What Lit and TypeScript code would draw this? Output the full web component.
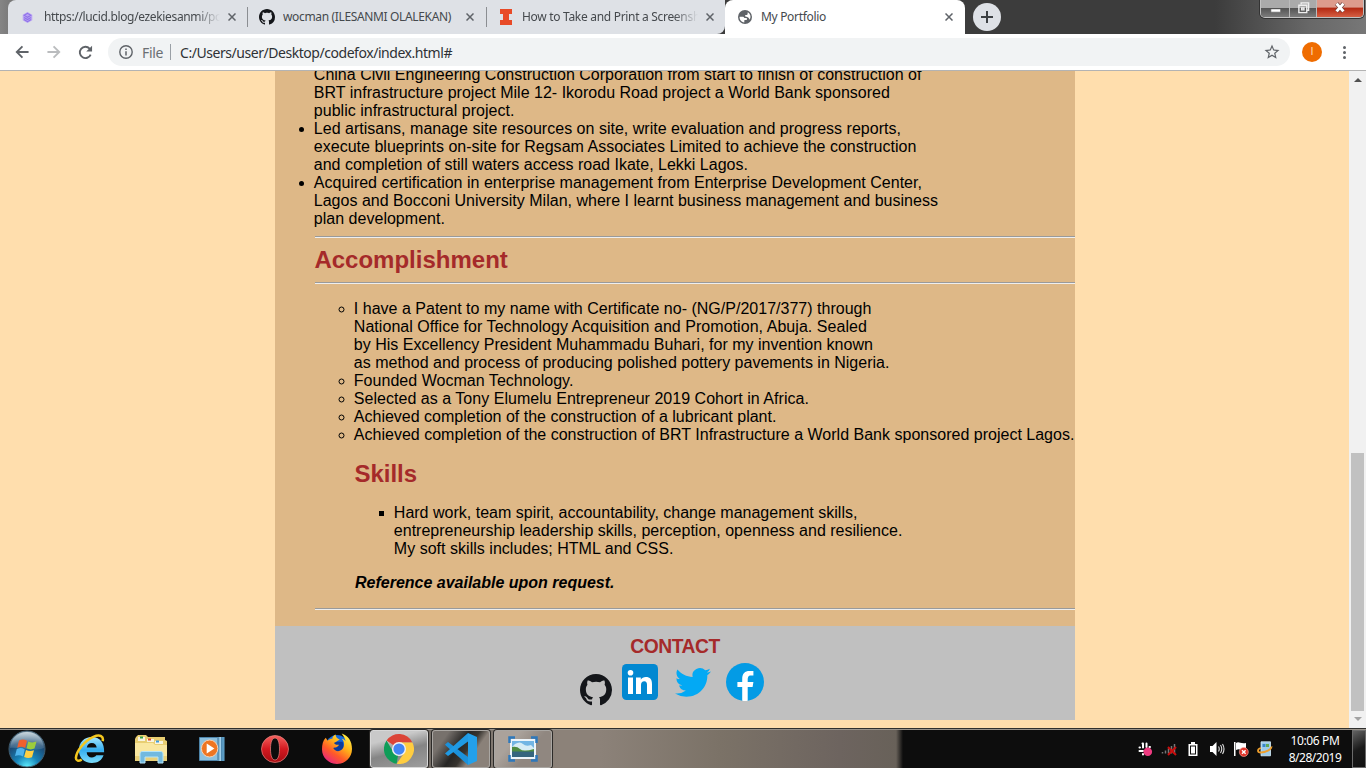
import { LitElement, html, svg, css } from "lit";
import { customElement, property } from "lit/decorators.js";

const OCTOCAT = "M8 0C3.58 0 0 3.58 0 8c0 3.54 2.29 6.53 5.47 7.59.4.07.55-.17.55-.38 0-.19-.01-.82-.01-1.49-2.01.37-2.53-.49-2.69-.94-.09-.23-.48-.94-.82-1.13-.28-.15-.68-.52-.01-.53.63-.01 1.08.58 1.23.82.72 1.21 1.87.87 2.33.66.07-.52.28-.87.51-1.07-1.78-.2-3.64-.89-3.64-3.95 0-.87.31-1.59.82-2.15-.08-.2-.36-1.02.08-2.12 0 0 .67-.21 2.2.82.64-.18 1.32-.27 2-.27s1.36.09 2 .27c1.53-1.04 2.2-.82 2.2-.82.44 1.1.16 1.92.08 2.12.51.56.82 1.27.82 2.15 0 3.07-1.87 3.75-3.65 3.95.29.25.54.73.54 1.48 0 1.07-.01 1.93-.01 2.2 0 .21.15.46.55.38A8.01 8.01 0 0 0 16 8c0-4.42-3.58-8-8-8z";

const icons: Record<string, [string, unknown]> = {
  lucid: ["0 0 12 14", svg`<path fill="#b9a3f3" d="M6 1l5.2 3v6L6 13 .8 10V4z"/><path fill="none" stroke="#8f72e8" stroke-width="1.100" d="M6 2.600l3.600 2.100L6 6.800 2.400 4.700zM2.200 7L6 9.200 9.800 7M2.200 9.200L6 11.400l3.800-2.200"/>`],
  github: ["0 0 16 16", svg`<path fill="#14161a" d=${OCTOCAT} />`],
  illinois: ["0 0 12 16", svg`<path fill="#e84a27" d="M0 0h12v5H9v6h3v5H0v-5h3V5H0z"/>`],
  globe: ["0 0 24 24", svg`<path fill="#5f6368" d="M12 0a12 12 0 1 0 0 24 12 12 0 0 0 0-24zm-1.200 21.300C5.500 20.700 2.500 16.500 2.700 11.500H8c1.500 0 2 1 3 2h2.500c1.500 0 2 1 2 2s-.5 1.500-1.500 1.500h-2c-1 0-1.200.8-1.200 1.500zM20 16.500c-.5-1.500-1.500-2.500-2.500-3.500-1-1.200-2.500-1.500-4-1.500-1 0-1.500-.7-1.500-1.500s.5-1.500 1.500-1.500H15c1 0 1.500-.8 1.500-1.500V4c4.500 2 6.500 8 3.500 12.500z"/>`],
  close: ["0 0 8 8", svg`<path stroke="#5f6368" stroke-width="1.500" d="M.5.5l7 7M7.500.5l-7 7"/>`],
  plus: ["0 0 12 12", svg`<path stroke="#3c4043" stroke-width="2" d="M6 0v12M0 6h12"/>`],
  back: ["0 0 16 16", svg`<path fill="none" stroke="#5f6368" stroke-width="2.100" d="M15.500 8H2.500M8.500 1.500L2 8l6.500 6.500"/>`],
  forward: ["0 0 16 16", svg`<path fill="none" stroke="#babcbe" stroke-width="2.100" d="M.5 8h13M7.500 1.500L14 8l-6.500 6.500"/>`],
  reload: ["0 0 16 16", svg`<path fill="none" stroke="#5f6368" stroke-width="2" d="M13.500 10.200A6 6 0 1 1 12.400 3.900L14 5.500"/><path fill="#5f6368" d="M15 .8V7H8.800z"/>`],
  info: ["0 0 14 14", svg`<circle cx="7" cy="7" r="6.200" fill="none" stroke="#5f6368" stroke-width="1.400"/><path stroke="#5f6368" stroke-width="1.500" d="M7 6.200v4.200M7 3.500v1.500"/>`],
  star: ["0 0 24 24", svg`<path fill="#5f6368" d="M22 9.240l-7.190-.62L12 2 9.190 8.630 2 9.240l5.460 4.730L5.820 21 12 17.270 18.180 21l-1.630-7.030L22 9.240zM12 15.400l-3.760 2.270 1-4.280-3.320-2.880 4.380-.38L12 6.100l1.710 4.040 4.380.38-3.320 2.880 1 4.280L12 15.400z"/>`],
  linkedin: ["0 0 36 36", svg`<rect width="36" height="36" rx="4.500" fill="#0288d1"/><g fill="#fff"><circle cx="8.500" cy="8.700" r="2.800"/><path d="M6 13.500h5V30H6zM14 13.500h4.800v2.200c1-1.600 2.800-2.600 5-2.600 4.300 0 6.200 2.600 6.200 7V30h-5v-9.200c0-2.200-.8-3.600-2.700-3.600-2.100 0-3.300 1.500-3.300 3.800v9h-5z"/></g>`],
  twitter: ["0 1.500 24 20.500", svg`<path fill="#03a9f4" d="M23.950 4.570a10 10 0 0 1-2.820.77 4.960 4.960 0 0 0 2.160-2.720c-.95.55-2 .95-3.130 1.180a4.920 4.920 0 0 0-8.380 4.480C7.690 8.100 4.070 6.130 1.640 3.160a4.820 4.820 0 0 0-.67 2.480c0 1.710.87 3.210 2.190 4.100a4.900 4.900 0 0 1-2.230-.62v.06a4.920 4.920 0 0 0 3.950 4.830 5 5 0 0 1-2.210.08 4.940 4.940 0 0 0 4.600 3.420A9.870 9.870 0 0 1 0 19.540a14 14 0 0 0 7.550 2.210c9.050 0 14-7.500 14-13.980 0-.21 0-.42-.02-.63a9.940 9.940 0 0 0 2.460-2.550z"/>`],
  facebook: ["0 0 38 38", svg`<circle cx="19" cy="19" r="19" fill="#039be5"/><path fill="#fff" d="M21.700 24h4.900l.8-5h-5.700v-2.700c0-2 .7-3.900 2.600-3.900h3.100V8.100c-.5-.1-1.700-.2-3.900-.2-4.600 0-7.300 2.400-7.300 8V19h-4.800v5h4.800v13.700c.9.1 1.900.3 2.900.3.900 0 1.700-.1 2.600-.2z"/>`],
  start: ["0 0 38 38", svg`<defs><radialGradient id="o" cx=".5" cy="1" r=".95"><stop offset="0" stop-color="#5ff0ff"/><stop offset=".35" stop-color="#1683b8"/><stop offset=".75" stop-color="#1d4670"/><stop offset="1" stop-color="#7d97a8"/></radialGradient><linearGradient id="gl" x2="0" y2="1"><stop offset="0" stop-color="#d5e0e6" stop-opacity=".85"/><stop offset="1" stop-color="#7a9fb5" stop-opacity=".25"/></linearGradient></defs><circle cx="19" cy="19" r="18" fill="url(#o)" stroke="#415e70"/><path fill="url(#gl)" d="M2 18C3 7 11 2 19 2s16 5 17 16c-10 4-24-1-34 0z"/><path fill="#f0602e" d="M11 10.500c3-1.500 5.500-1.200 8 .3L17.200 18c-2.500-1.500-5-1.700-8-.3z"/><path fill="#9ccc3c" d="M20.300 11.400c2.700 1.400 5.400 1.300 8.200.2l-2 7c-2.800 1.200-5.300 1-8 -.3z"/><path fill="#4fb4ec" d="M8.800 19c3-1.400 5.500-1.100 8 .4L15 26.500c-2.500-1.500-5-1.700-8-.4z"/><path fill="#ffd042" d="M18 20c2.700 1.400 5.300 1.300 8 .2l-2 7c-2.700 1.100-5.200 1-7.900-.3z"/>`],
  ie: ["0 0 32 32", svg`<defs><linearGradient id="ie" x2="0" y2="1"><stop offset="0" stop-color="#a8e8ff"/><stop offset=".5" stop-color="#35aef0"/><stop offset="1" stop-color="#7cdcfb"/></linearGradient></defs><path fill="url(#ie)" fill-rule="evenodd" d="M18.500 4C10.500 4 5 9.500 5 17.500S10.500 31 18.500 31c6 0 10.300-2.800 12-8h-7.500c-1 1.500-2.400 2.200-4.500 2.200-3.200 0-5.200-2-5.400-5.400h18C31.600 10 26.500 4 18.500 4zm-5.300 11c.4-3 2.400-4.800 5.200-4.800s4.800 1.800 5 4.800z"/><path fill="none" stroke="#f4c71e" stroke-width="2.600" d="M29.500 8.500C31 3.500 27 1 20 4 11 8 2.500 18.500 2 25.500c-.2 3.500 2.500 3.800 6 2"/>`],
  folder: ["0 0 32 30", svg`<path fill="#e8ce72" d="M1 3l2-2h8l2 2h17v3l2 1v20H0V5z"/><path fill="#f8f4df" d="M3 3h7v4H3zM12 5h7v3h-7zM20 7h8v3h-8z"/><path fill="#31a34a" d="M5 2.500h3v2H5z"/><path fill="#e04b2f" d="M13 4.500h3v2h-3z"/><path fill="#3f9bdc" d="M21 6.500h3v2h-3z"/><path fill="#f9e7a0" d="M0 9h18l2 2h12v15H0z"/><path fill="#e9d078" d="M0 22h32v5H0z"/><path fill="#72b9df" stroke="#b5e4f8" d="M5 29V20c0-2 1-2.500 3-2.500h17c2 0 3 .5 3 2.500v9h-5v-6H10v6z"/>`],
  player: ["0 0 28 26", svg`<path fill="#5b9cc4" d="M9 1h17.500v24H9z"/><path fill="#a5d2ea" d="M6 1h17v24H6z"/><path stroke="#4983ab" d="M23.500 1v24M20.500 1v24"/><path fill="#8dc0de" stroke="#4f86ab" d="M.5 1.500h19v23H.5z"/><circle cx="11" cy="12.500" r="8.500" fill="#ee7522" stroke="#f6d2b5"/><path fill="#fff" d="M8 7.500l8 5-8 5z"/>`],
  opera: ["0 0 28 28", svg`<defs><linearGradient id="op" x2="0" y2="1"><stop offset="0" stop-color="#f5625e"/><stop offset=".5" stop-color="#d31920"/><stop offset="1" stop-color="#a70d13"/></linearGradient></defs><path fill="url(#op)" stroke="#eb8581" stroke-width=".7" fill-rule="evenodd" d="M14 .5a13.500 13.500 0 1 0 0 27 13.500 13.500 0 0 0 0-27zM14 3c3 0 4.500 4.500 4.500 11S17 25 14 25s-4.500-4.500-4.500-11S11 3 14 3z"/>`],
  firefox: ["0 0 32 32", svg`<defs><linearGradient id="ff" x1=".85" y1=".05" x2=".2" y2="1"><stop offset="0" stop-color="#fff14a"/><stop offset=".35" stop-color="#ffb319"/><stop offset=".65" stop-color="#ff5a28"/><stop offset="1" stop-color="#e5208a"/></linearGradient></defs><circle cx="16" cy="14" r="12" fill="#1469dc"/><path fill="#0b3c9c" d="M13 9h9l2 8-7 5-7-4z"/><path fill="url(#ff)" d="M4 5l2 3c1.500-1.500 3-2 5-2 0-2 1.500-3.500 3.500-4.500 0 3 2 4 4.500 5.500-3 1-4 2.500-6 3 0 2 3 2.500 5 2-1 3-4 2.500-6 3.500 2 4.500 9 4.500 11-1 1.500-4.500-.5-7-2-8.500 2 .2 3.500 1.500 4 2.500C25 5.500 22.500 3 21 .5c7 2 11 8 11 16C32 25.500 24.500 32 16 32S0 25.500 0 17c0-5 1-9 4-12z"/>`],
  chrome: ["0 0 32 32", svg`<path fill="#db4437" d="M16 16L2.700 7A16 16 0 0 1 30.300 9H16z"/><path fill="#0f9d58" d="M16 16l-2.500 15.800A16 16 0 0 1 2.700 7L10 19.500z"/><path fill="#ffcd40" d="M16 9h14.300A16 16 0 0 1 13.500 31.800L22.500 19z"/><circle cx="16" cy="16" r="7.500" fill="#f1f1f1"/><circle cx="16" cy="16" r="6" fill="#4285f4"/>`],
  code: ["0 0 32 32", svg`<path fill="#1b91db" d="M0 11.500L3 9l20 15v8L1 12.800z"/><path fill="#1f9ae4" d="M0 20.500L23 0v8.500L3 23z"/><path fill="#23a0ea" d="M23 0l9 4v24l-9 4z"/>`],
  picture: ["0 0 30 26", svg`<path fill="#eef5fa" d="M2 3h26v20H2z"/><path fill="#72b5e4" d="M4 5h22v8H4z"/><path fill="#d7ecf5" d="M7 8q5-3 8 0t8 1l3 3v2H4v-3z"/><path fill="#4e8b43" d="M4 11q5-1 8 2t14 0v3H4z"/><path fill="#35657e" d="M4 15.500h22V21H4z"/><path fill="none" stroke="#2e78bb" stroke-width="2.500" d="M1.500 7V1.500H7M23 1.500h5.500V7M1.500 19v5.500H7M23 24.500h5.500V19"/>`],
  slack: ["0 0 16 16", svg`<path stroke="#fff" stroke-width="2" stroke-linecap="round" d="M6 3v3.500M9.500 2.500V6M2.500 6.500H3M12.500 6h.5M2.500 10h3.500M6 13v.5M5.500 2.500h.5"/><circle cx="10.800" cy="10.700" r="4.300" fill="#ee3b80"/>`],
  signal: ["0 0 16 16", svg`<path stroke="#777" stroke-width="1.500" d="M1.500 11v1.500M4.500 9.500v3M7.500 7.500v5M10.500 5v7.500M13.500 3v9.500"/><path stroke="#c90d0d" stroke-width="2" d="M7 6l8 8M15 6l-8 8"/>`],
  battery: ["0 0 10 14", svg`<path fill="#fff" d="M3 0h4v2h2.500v12H.5V2H3z"/><path fill="#111" d="M2 3.500h6v9H2z"/><path fill="#fff" d="M3 4.500h4v7H3z"/>`],
  volume: ["0 0 16 16", svg`<path fill="#fff" d="M1 5h2.500l4-4v14l-4-4H1z"/><path fill="none" stroke="#ddd" stroke-width="1.100" d="M9.500 5.500q1.500 2.500 0 5M11.500 4q2.500 4 0 8M13.500 3q3 5 0 10"/>`],
  flag: ["0 0 16 16", svg`<path fill="#fff" d="M1 1h1.500v14H1zM3 2c3-2 4 1 10 0v7C8 10 7 7 3 9z"/><circle cx="10.800" cy="11" r="4.500" fill="#df3328" stroke="#f5aca4" stroke-width=".6"/><path stroke="#fff" stroke-width="1.400" d="M9 9.200l3.600 3.600M12.600 9.200L9 12.800"/>`],
  update: ["0 0 16 16", svg`<path fill="#9dcbe9" stroke="#d6eefa" stroke-width=".8" d="M4 .8h9.500v14H4z"/><path fill="#3886c8" d="M5.500 3h3v3h-3z"/><path fill="#61a952" d="M9 3h3v3H9z"/><path fill="none" stroke="#ed9e2c" stroke-width="1.800" d="M4 7c-4 1-4 4.500 0 4.500s11-3 10.500-6"/>`],
};

@customElement("ui-icon")
class UiIcon extends LitElement {
  @property() name = "";
  static styles = css`
    :host { display: block; flex: none; }
    svg { display: block; width: 100%; height: 100%; }
  `;
  render() {
    const [box, shape] = icons[this.name];
    return html`<svg viewBox=${box} fill="none" preserveAspectRatio="none">${shape}</svg>`;
  }
}

/* One line of text spread evenly over a given width. */
@customElement("fit-line")
class FitLine extends LitElement {
  @property() text = "";
  @property({ type: Number }) width = 0;
  static styles = css`
    :host { display: block; white-space: nowrap; }
    .line { display: inline-block; }
  `;
  render() {
    return html`<span class="line">${this.text}</span>`;
  }
  firstUpdated() {
    const line = this.renderRoot.querySelector<HTMLElement>(".line")!;
    const natural = line.getBoundingClientRect().width;
    if (this.width) line.style.letterSpacing = `${(this.width - natural) / this.text.length}px`;
  }
}

type Line = [string, number];
const lines = (rows: Line[]) => rows.map(([text, width]) => html`<fit-line .text=${text} .width=${width}></fit-line>`);

const experience: Line[][] = [
  [
    ["China Civil Engineering Construction Corporation from start to finish of construction of", 607],
    ["BRT infrastructure project Mile 12- Ikorodu Road project a World Bank sponsored", 575.5],
    ["public infrastructural project.", 200],
  ],
  [
    ["Led artisans, manage site resources on site, write evaluation and progress reports,", 586.5],
    ["execute blueprints on-site for Regsam Associates Limited to achieve the construction", 602],
    ["and completion of still waters access road Ikate, Lekki Lagos.", 433.5],
  ],
  [
    ["Acquired certification in enterprise management from Enterprise Development Center,", 607.5],
    ["Lagos and Bocconi University Milan, where I learnt business management and business", 623.5],
    ["plan development.", 130.5],
  ],
];

const accomplishments: Line[][] = [
  [
    ["I have a Patent to my name with Certificate no- (NG/P/2017/377) through", 517],
    ["National Office for Technology Acquisition and Promotion, Abuja. Sealed", 512.5],
    ["by His Excellency President Muhammadu Buhari, for my invention known", 518.5],
    ["as method and process of producing polished pottery pavements in Nigeria.", 535],
  ],
  [["Founded Wocman Technology.", 219]],
  [["Selected as a Tony Elumelu Entrepreneur 2019 Cohort in Africa.", 454.5]],
  [["Achieved completion of the construction of a lubricant plant.", 422]],
  [["Achieved completion of the construction of BRT Infrastructure a World Bank sponsored project Lagos.", 720]],
];

const skills: Line[] = [
  ["Hard work, team spirit, accountability, change management skills,", 463],
  ["entrepreneurship leadership skills, perception, openness and resilience.", 508],
  ["My soft skills includes; HTML and CSS.", 279],
];

const tabs = [
  { icon: "lucid", title: "https://lucid.blog/ezekiesanmi/po", width: 178, fade: true },
  { icon: "github", title: "wocman (ILESANMI OLALEKAN)", width: 168 },
  { icon: "illinois", title: "How to Take and Print a Screensh", width: 178, fade: true },
  { icon: "globe", title: "My Portfolio", width: 65, active: true },
];

@customElement("browser-chrome")
class BrowserChrome extends LitElement {
  static styles = css`
    :host { display: block; font-family: "Noto Sans", "Open Sans", sans-serif; color: #45494d; }
    .frame { height: 34px; display: flex; padding-left: 8px;
      background: linear-gradient(90deg, #858585 0, #777 12px, #3c3c3c 60px, #3c3c3c 1215px, #686868 1310px, #777 1366px); }
    .tab { box-sizing: border-box; width: 239px; height: 34px; display: flex; align-items: center; padding: 0 12px 0 12px; background: #dee1e6; font-size: 12px; }
    .tab:first-child { border-radius: 8px 0 0 0; padding-right: 11px; }
    .tab.active { width: 240px; background: #fff; border-radius: 8px 8px 0 0; }
    .tab:nth-child(3) { border-radius: 0 0 8px 0; padding-right: 11px; }
    .tab + .tab:not(.active) { padding-left: 12px; background: linear-gradient(#8b8e92, #8b8e92) 0 7px / 1px 20px no-repeat, #dee1e6; }
    .fav { width: 16px; height: 16px; }
    .fav.lucid { width: 11px; height: 13px; margin: 0 3px 0 2px; }
    .fav.illinois { width: 12px; margin: 0 2px; }
    .fav.globe { width: 14px; height: 14px; margin: 0 1px; }
    .title { flex: 1; overflow: hidden; margin-left: 8px; margin-right: 4px; line-height: 18px; }
    .title.fade { -webkit-mask-image: linear-gradient(90deg, #000 152px, transparent 176px); }
    .x { width: 8px; height: 8px; }
    .new { width: 28px; height: 28px; margin: 3px 0 0 8px; border-radius: 50%; background: #dee1e6; display: grid; place-items: center; }
    .new ui-icon { width: 12px; height: 12px; }
    .controls { margin: 0 2px 0 auto; display: flex; height: 18px; width: 104px; box-sizing: border-box; border: 1px solid #c2c2c2; border-top: 0; border-radius: 0 0 5px 5px; overflow: hidden; box-shadow: 0 0 0 1px #333; }
    .ctl { display: grid; place-items: center; width: 28px; padding-bottom: 2px; border-right: 1px solid #bbb; background: linear-gradient(#aaa 0 45%, #555 50%, #7c7c7c); }
    .ctl.mid { width: 26px; }
    .ctl.end { flex: 1; border: 0; background: linear-gradient(#dd9b8c 0 40%, #b52b14 50%, #d55f43); }
    .ctl svg { width: 13px; height: 13px; }
    .ctl.end svg { width: 12px; height: 11px; }
    .bar { height: 36px; display: flex; align-items: center; background: #fff; }
    .back { width: 14px; height: 14px; margin-left: 15px; }
    .fwd { width: 14px; height: 14px; margin-left: 18px; }
    .reload { width: 15px; height: 15px; margin-left: 17px; }
    .omni { margin-left: 15px; width: 1182px; height: 28px; border-radius: 14px; background: #f1f3f4; display: flex; align-items: center; box-sizing: border-box; padding: 0 9px 0 11px; font-size: 14px; color: #2e3134; }
    .info { width: 14px; height: 14px; }
    .file { margin-left: 9px; color: #6b6f73; width: 21px; }
    .sep { width: 1px; height: 16px; background: #9aa0a6; margin: 0 9px 0 7px; }
    .star { width: 18px; height: 18px; margin-left: auto; }
    .avatar { width: 20px; height: 20px; margin-left: 12px; border-radius: 50%; background: #ef6c00; color: #ffd6b0; font: 11px/20px Roboto, sans-serif; text-align: center; }
    .dots { display: grid; gap: 2px; margin-left: 21px; }
    .dots i { width: 3px; height: 3px; border-radius: 50%; background: #5f6368; }
    .edge { height: 1px; background: #b3b3b3; }
  `;
  render() {
    return html`
      <div class="frame">
        ${tabs.map((t) => html`
          <div class="tab ${t.active ? "active" : ""}">
            <ui-icon class="fav ${t.icon}" name=${t.icon}></ui-icon>
            <div class="title ${t.fade ? "fade" : ""}"><fit-line .text=${t.title} .width=${t.width}></fit-line></div>
            <ui-icon class="x" name="close"></ui-icon>
          </div>`)}
        <div class="new"><ui-icon name="plus"></ui-icon></div>
        <div class="controls">
          <div class="ctl"><svg viewBox="0 0 14 14"><path fill="#fff" stroke="#555" stroke-width=".6" d="M2 8.500h10.500v3.500H2z" /></svg></div>
          <div class="ctl mid"><svg viewBox="0 0 14 14"><path fill="none" stroke="#eee" stroke-width="1.500" d="M4.500 3.500V2H12.500v8H11M2 4.500h8.500v8H2zM5 7.500h2.500v2H5z" /></svg></div>
          <div class="ctl end"><svg viewBox="0 0 14 14" preserveAspectRatio="none"><path stroke="#6a3c38" stroke-width="5" d="M3 2l8 10M11 2l-8 10" /><path stroke="#fff" stroke-width="3.400" d="M3 2l8 10M11 2l-8 10" /></svg></div>
        </div>
      </div>
      <div class="bar">
        <ui-icon class="back" name="back"></ui-icon>
        <ui-icon class="fwd" name="forward"></ui-icon>
        <ui-icon class="reload" name="reload"></ui-icon>
        <div class="omni">
          <ui-icon class="info" name="info"></ui-icon>
          <fit-line class="file" .text=${"File"} .width=${21}></fit-line>
          <div class="sep"></div>
          <fit-line .text=${"C:/Users/user/Desktop/codefox/index.html#"} .width=${272}></fit-line>
          <ui-icon class="star" name="star"></ui-icon>
        </div>
        <div class="avatar">I</div>
        <div class="dots"><i></i><i></i><i></i></div>
      </div>
      <div class="edge"></div>
    `;
  }
}

@customElement("portfolio-page")
class PortfolioPage extends LitElement {
  static styles = css`
    :host { display: flex; height: 657px; overflow: hidden; background: #ffdead; font: 16px/18px "Liberation Sans", Arial, sans-serif; color: #000; }
    .view { flex: 1; overflow: hidden; }
    .sheet { width: 800px; margin: -5px 0 0 275px; background: #deb887; }
    .body { padding-left: 40px; height: 560px; }
    ul { margin: 0; padding: 0; list-style: disc; }
    ul.ring { list-style: circle; margin-top: 16px; }
    ul.square { list-style: square; }
    ul.work li:first-child { list-style: none; }
    li, h2 { text-indent: -0.6px; }
    .nested { padding-left: 40px; }
    h2 { margin: 0; font-size: 24px; line-height: 28px; color: #a52a2a; }
    h2.skills { margin: 16px 0; }
    hr { margin: 8px 0; border: 0; border-top: 1px solid #9a9a9a; border-bottom: 1px solid #eee; box-sizing: border-box; height: 2px; }
    .ref { margin: 16px 0; font-weight: bold; font-style: italic; }
    .contact { height: 94px; background: #c0c0c0; text-align: center; }
    h3 { margin: 0; padding-top: 10px; font-size: 19.3px; letter-spacing: -0.45px; line-height: 21px; color: #a52a2a; }
    .socials { display: flex; align-items: flex-start; padding: 6px 0 0 305px; }
    .gh { width: 32px; height: 32px; margin-top: 11px; }
    .li { width: 36px; height: 36px; margin: 1px 0 0 10px; }
    .tw { width: 36px; height: 30px; margin: 4px 0 0 17px; }
    .fb { width: 38px; height: 38px; margin-left: 15px; }
    .scroll { width: 17px; background: #f1f1f1; display: flex; flex-direction: column; align-items: center; box-sizing: border-box; padding: 7px 0 7px; }
    .up { border: 4px solid transparent; border-top: 0; border-bottom: 4px solid #505050; }
    .down { border: 4px solid transparent; border-bottom: 0; border-top: 4px solid #a3a3a3; }
    .thumb { width: 13px; height: 258px; margin: auto 0 6px; background: #c1c1c1; }
  `;
  render() {
    return html`
      <div class="view">
        <div class="sheet">
          <div class="body">
            <ul class="work">${experience.map((r) => html`<li>${lines(r)}</li>`)}</ul>
            <hr />
            <h2>Accomplishment</h2>
            <hr />
            <div class="nested">
              <ul class="ring">${accomplishments.map((r) => html`<li>${lines(r)}</li>`)}</ul>
              <h2 class="skills">Skills</h2>
              <div class="nested"><ul class="square"><li>${lines(skills)}</li></ul></div>
              <div class="ref"><fit-line .text=${"Reference available upon request."} .width=${259.5}></fit-line></div>
            </div>
            <hr />
          </div>
          <div class="contact">
            <h3>CONTACT</h3>
            <div class="socials">
              <ui-icon class="gh" name="github"></ui-icon>
              <ui-icon class="li" name="linkedin"></ui-icon>
              <ui-icon class="tw" name="twitter"></ui-icon>
              <ui-icon class="fb" name="facebook"></ui-icon>
            </div>
          </div>
        </div>
      </div>
      <div class="scroll"><div class="up"></div><div class="thumb"></div><div class="down"></div></div>
    `;
  }
}

@customElement("task-bar")
class TaskBar extends LitElement {
  static styles = css`
    :host { display: flex; height: 40px; box-sizing: border-box; border-top: 1px solid #30302e; box-shadow: inset 0 1px #9a948c; color: #fff;
      background: linear-gradient(90deg, #0c0c0c 0 370px, #756e67 430px, #8c8279 560px, #8c8279 600px, #7b7267 720px, #6d645f 840px, #686159 896px, #0d0d0d 903px); font: 12px/17px "Noto Sans", sans-serif; }
    .apps { display: flex; align-items: center; padding-left: 8px; }
    .start { width: 38px; height: 38px; }
    .ie { width: 31px; height: 31px; margin-left: 28px; }
    .folder { width: 32px; height: 30px; margin-left: 30px; }
    .player { width: 27px; height: 26px; margin-left: 32px; }
    .opera { width: 28px; height: 28px; margin-left: 35px; }
    .firefox { width: 30px; height: 31px; margin-left: 33px; }
    .win { box-sizing: border-box; width: 58px; height: 38px; border: 1px solid #aaa7a3; border-radius: 3px; display: grid; place-items: center; margin-left: 4px; box-shadow: 0 0 0 1px #2c2a28; }
    .win.a { margin-left: 18px; border-color: #d8d8d8; background: linear-gradient(165deg, #c9c9c9 0 25%, #858585 55%, #9d9d9d); }
    .win.b { background: linear-gradient(125deg, #77716c 0 20%, #262524 45%, #37342f 58%, #8a8179 70%); }
    .win.c { background: linear-gradient(130deg, #aaa29b 0 30%, #908780 60%); }
    .chrome { width: 30px; height: 30px; }
    .code { width: 32px; height: 32px; }
    .picture { width: 30px; height: 26px; }
    .tray { margin-left: auto; display: flex; align-items: center; gap: 8px; }
    .tray ui-icon { width: 16px; height: 16px; }
    .tray .battery { width: 10px; height: 14px; margin: 0 3px; }
    .clock { width: 56px; margin-left: 6px; display: grid; justify-items: center; }
    .peek { box-sizing: border-box; width: 14px; margin-left: 1px; height: 38px; margin-top: 1px; border: 1px solid #6b6b6b; background: linear-gradient(150deg, #626262, #1a1a1a 50%, #111); }
  `;
  render() {
    return html`
      <div class="apps">
        ${["start", "ie", "folder", "player", "opera", "firefox"].map((n) => html`<ui-icon class=${n} name=${n}></ui-icon>`)}
        <div class="win a"><ui-icon class="chrome" name="chrome"></ui-icon></div>
        <div class="win b"><ui-icon class="code" name="code"></ui-icon></div>
        <div class="win c"><ui-icon class="picture" name="picture"></ui-icon></div>
      </div>
      <div class="tray">
        ${["slack", "signal", "battery", "volume", "flag", "update"].map((n) => html`<ui-icon class=${n} name=${n}></ui-icon>`)}
        <div class="clock">
          <fit-line .text=${"10:06 PM"} .width=${49}></fit-line>
          <fit-line .text=${"8/28/2019"} .width=${52.5}></fit-line>
        </div>
        <div class="peek"></div>
      </div>
    `;
  }
}

@customElement("app-root")
class AppRoot extends LitElement {
  static styles = css`
    :host { display: block; width: 1366px; height: 768px; overflow: hidden; }
  `;
  render() {
    return html`<browser-chrome></browser-chrome><portfolio-page></portfolio-page><task-bar></task-bar>`;
  }
}
